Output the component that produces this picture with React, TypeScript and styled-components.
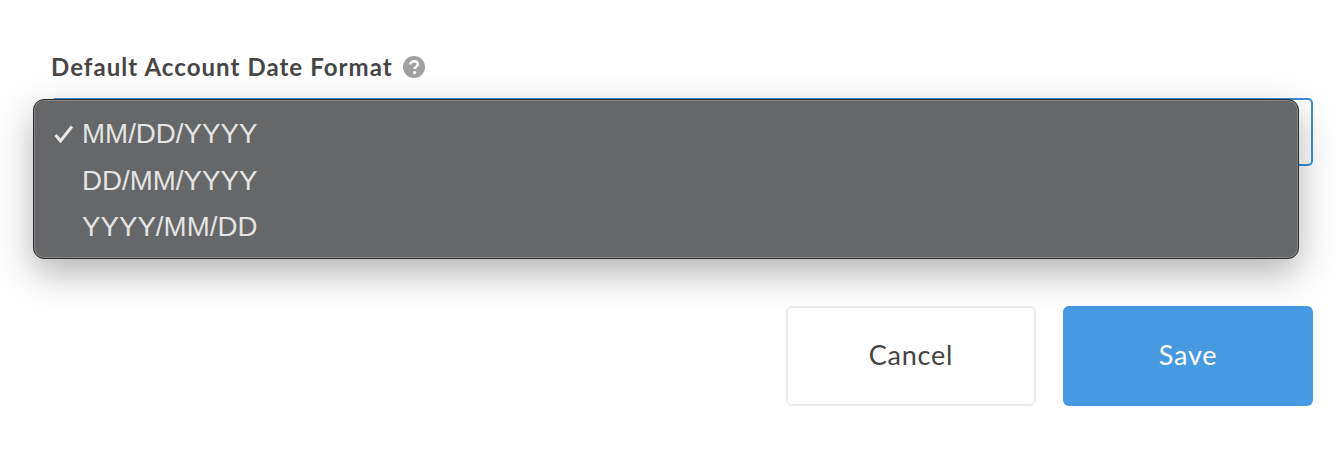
import React from "react";
import styled, { createGlobalStyle } from "styled-components";

const GlobalStyle = createGlobalStyle`
  html, body {
    margin: 0;
    background: #ffffff;
    font-family: "Lato", "Liberation Sans", sans-serif;
  }
`;

const Page = styled.div`
  width: 1340px;
  height: 450px;
  box-sizing: border-box;
  padding: 52px 27px 0 51px;
  overflow: hidden;
`;

const Label = styled.label`
  display: flex;
  align-items: center;
  gap: 10px;
  height: 29px;
  padding-bottom: 1px;
  font-size: 24px;
  font-weight: 700;
  letter-spacing: 1.06px;
  color: #464646;
`;

const SelectWrap = styled.div`
  position: relative;
  margin-top: 16px;
  height: 68px;
  box-sizing: border-box;
  border: 2px solid #3d8fd8;
  border-radius: 5px;
`;

const Menu = styled.ul`
  position: absolute;
  left: -20px;
  top: -1px;
  width: 1266px;
  height: 160px;
  box-sizing: border-box;
  margin: 0;
  padding: 11px 0 0;
  list-style: none;
  background: #666768;
  border: 1px solid #2e2e2e;
  border-radius: 11px;
  box-shadow: inset 0 0 0 1px #858585, 0 14px 36px rgba(0, 0, 0, 0.3);
`;

const Option = styled.li`
  display: flex;
  align-items: center;
  height: 46.5px;
  padding-left: 48px;
  position: relative;
  font-family: "Liberation Sans", sans-serif;
  font-size: 27.7px;
  color: #e4e4e4;
`;

const Check = styled.svg`
  position: absolute;
  left: 20px;
  top: 14px;
  width: 20px;
  height: 18px;
`;

const Actions = styled.div`
  display: flex;
  justify-content: flex-end;
  gap: 27px;
  margin-top: 140px;
`;

const Button = styled.button<{ $primary?: boolean }>`
  width: 250px;
  height: 100px;
  box-sizing: border-box;
  padding: 0 0 3px;
  border-radius: 6px;
  border: 2px solid ${({ $primary }) => ($primary ? "#4799e2" : "#ececec")};
  background: ${({ $primary }) => ($primary ? "#4799e2" : "#ffffff")};
  color: ${({ $primary }) => ($primary ? "#ffffff" : "#444444")};
  font-family: "Lato", "Liberation Sans", sans-serif;
  font-size: 27px;
  font-weight: 400;
  letter-spacing: 0.8px;
`;

const options = ["MM/DD/YYYY", "DD/MM/YYYY", "YYYY/MM/DD"];

const HelpIcon = () => (
  <svg width="22" height="22" viewBox="0 0 22 22">
    <circle cx="11" cy="11" r="11" fill="#a0a0a0" />
    <path
      d="M7.4 8.6c0-2 1.6-3.4 3.7-3.4s3.6 1.2 3.6 3c0 1.4-.8 2.1-1.8 2.8-.9.6-1.2 1-1.2 2"
      fill="none"
      stroke="#ffffff"
      strokeWidth="2.5"
    />
    <circle cx="11.6" cy="16.6" r="1.6" fill="#ffffff" />
  </svg>
);

export default function App() {
  return (
    <Page>
      <GlobalStyle />
      <Label>
        Default Account Date Format
        <HelpIcon />
      </Label>
      <SelectWrap>
        <Menu>
          {options.map((o, i) => (
            <Option key={o}>
              {i === 0 && (
                <Check viewBox="0 0 20 18">
                  <path d="M1.5 10l5 6L18 1.5" fill="none" stroke="#e8e8e8" strokeWidth="3" />
                </Check>
              )}
              {o}
            </Option>
          ))}
        </Menu>
      </SelectWrap>
      <Actions>
        <Button>Cancel</Button>
        <Button $primary>Save</Button>
      </Actions>
    </Page>
  );
}
